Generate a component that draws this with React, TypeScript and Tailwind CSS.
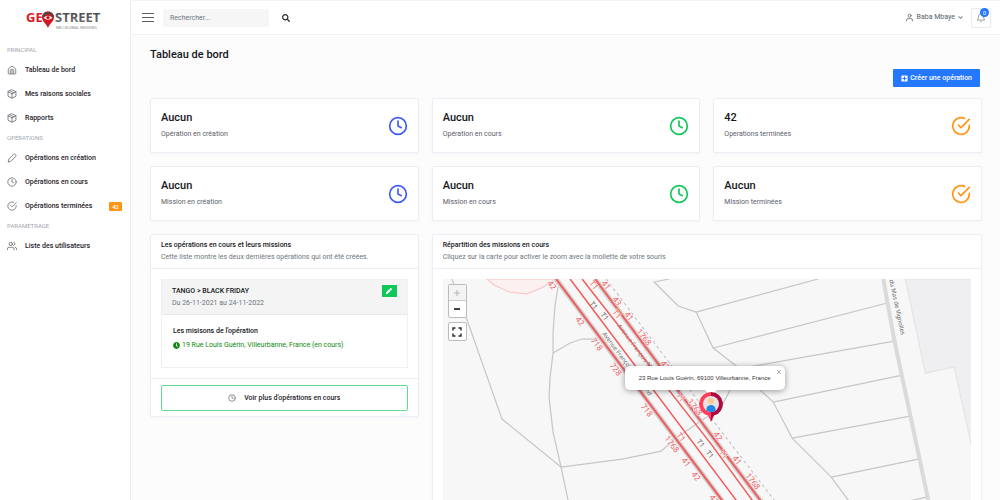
import type { ReactNode } from 'react'
import { FiBell, FiCheckCircle, FiClock, FiUser, FiUsers } from 'react-icons/fi'
import { FaChevronDown, FaClock, FaPen, FaPlusSquare, FaSearch } from 'react-icons/fa'

const HomeIcon = () => (
  <svg viewBox="0 0 24 24" className="size-[10px]" fill="none" stroke="currentColor" strokeWidth="1.8" strokeLinejoin="round">
    <path d="M3 9.500 12 2.500l9 7V20a1.500 1.500 0 0 1-1.500 1.500h-15A1.500 1.500 0 0 1 3 20z" />
    <path d="M8 21v-8a2 2 0 0 1 2-2h4a2 2 0 0 1 2 2v8M12 11v10" />
  </svg>
)

const BoxIcon = () => (
  <svg viewBox="0 0 24 24" className="size-[10px]" fill="none" stroke="currentColor" strokeWidth="1.8" strokeLinejoin="round" strokeLinecap="round">
    <path d="M12 2 21.500 6.500v11L12 22l-9.500-4.500v-11z" />
    <path d="M2.500 6.500 12 11.500l9.500-5M12 11.500V22M7 4.500l9.500 5" />
  </svg>
)

const PencilIcon = () => (
  <svg viewBox="0 0 24 24" className="size-[10px]" fill="none" stroke="currentColor" strokeWidth="1.8" strokeLinejoin="round" strokeLinecap="round">
    <path d="M3 21l1.500-6.500L16 3a2.500 2.500 0 0 1 3.500 0L21 4.500A2.500 2.500 0 0 1 21 8L9.500 19.500z" />
  </svg>
)

const menu: { label: string; items: { name: string; icon: ReactNode; badge?: string }[] }[] = [
  {
    label: 'PRINCIPAL',
    items: [
      { name: 'Tableau de bord', icon: <HomeIcon /> },
      { name: 'Mes raisons sociales', icon: <BoxIcon /> },
      { name: 'Rapports', icon: <BoxIcon /> },
    ],
  },
  {
    label: 'OPÉRATIONS',
    items: [
      { name: 'Opérations en création', icon: <PencilIcon /> },
      { name: 'Opérations en cours', icon: <FiClock size={10} strokeWidth={1.8} /> },
      { name: 'Opérations terminées', icon: <FiCheckCircle size={10} strokeWidth={1.8} />, badge: '42' },
    ],
  },
  {
    label: 'PARAMÉTRAGE',
    items: [{ name: 'Liste des utilisateurs', icon: <FiUsers size={10} strokeWidth={1.8} /> }],
  },
]

const stats = [
  { value: 'Aucun', label: 'Opération en création', icon: FiClock, color: 'text-[#3f5bfa]' },
  { value: 'Aucun', label: 'Opération en cours', icon: FiClock, color: 'text-[#10c759]' },
  { value: '42', label: 'Operations terminées', icon: FiCheckCircle, color: 'text-[#ff9512]' },
  { value: 'Aucun', label: 'Mission en création', icon: FiClock, color: 'text-[#3f5bfa]' },
  { value: 'Aucun', label: 'Mission en cours', icon: FiClock, color: 'text-[#10c759]' },
  { value: 'Aucun', label: 'Mission terminées', icon: FiCheckCircle, color: 'text-[#ff9512]' },
]

const parcels = [
  'M9 0 23 38 59 140 118 188 125 221 137 300',
  'M115 8 112 26 110 53V74L107 98 106 119 110 153 118 188',
  'M110 74 127 64 139 60H154',
  'M118 188 179 180 218 172 233 159 262 139 273 133 280 124 287 111',
  'M226 0 211 3 235 27 253 33 375 0',
  'M253 33 270 69 293 87 316 110 330 123 349 159 388 198 405 221 440 300',
  'M270 69 444 24',
  'M300 89 451 62',
  'M330 123 459 96',
  'M349 159 467 137',
  'M388 198 475 180',
  'M405 236 483 218',
]

const refs: [string, number, number][] = [
  ['42', 109, 6], ['42', 137, 42], ['718', 154, 65], ['728', 173, 90], ['718', 204, 131],
  ['1768', 229, 165], ['41', 243, 183], ['42', 253, 197], ['42', 271, 220],
  ['T1', 151, 6], ['41', 163, 6], ['43', 174, 22], ['T1', 174, 35], ['41', 186, 37],
  ['1768', 201, 58], ['42', 222, 86], ['T1', 238, 118], ['1768', 252, 128], ['T1', 238, 158],
  ['42', 275, 157], ['T1', 281, 175], ['41', 294, 181], ['1768', 310, 202],
]

const tramRefs: [string, number, number][] = [
  ['T1', 151, 26], ['T1', 162, 37], ['T1', 258, 164], ['T1', 267, 175],
]

function Logo() {
  return (
    <svg viewBox="0 0 78 22" className="h-[22px] w-[78px]" role="img" aria-label="Geostreet">
      <defs>
        <linearGradient id="geo" x1="0" y1="0" x2="0" y2="1">
          <stop offset="0" stopColor="#ee1c25" />
          <stop offset="1" stopColor="#c8141c" />
        </linearGradient>
        <linearGradient id="street" x1="0" y1="0" x2="0" y2="1">
          <stop offset="0" stopColor="#3c3c3e" />
          <stop offset="1" stopColor="#77787b" />
        </linearGradient>
      </defs>
      <g fontFamily="'Open Sans', sans-serif" fontWeight="700" fontSize="13">
        <text x="0" y="13" fill="url(#geo)">GE</text>
        <text x="29" y="13" fill="url(#street)">STREET</text>
      </g>
      <path d="M22 19C20.500 14.800 16 12.500 16 8.300a6 6 0 0 1 12 0c0 4.200-4.500 6.500-6 10.700z" fill="#d3161e" />
      <path d="M17 8.300a5.200 5.200 0 0 1 10.200 0" fill="none" stroke="#4a4a4c" strokeWidth="2" />
      <path d="M17.500 8.800q4.500-4 9 0-4.500 4-9 0z" fill="#fff" />
      <circle cx="22" cy="8.600" r="1.700" fill="#d3161e" />
      <text x="30" y="20" fontFamily="Roboto, sans-serif" fontSize="4" fill="#8b8b8e">NRJ GLOBAL REGIONS</text>
    </svg>
  )
}

function Sidebar() {
  return (
    <aside className="w-[131px] shrink-0 border-r border-[#ebedf7] bg-white">
      <div className="flex h-[42px] items-start justify-center pt-[9px]">
        <Logo />
      </div>
      <nav>
        {menu.map((group) => (
          <div key={group.label}>
            <h3 className="h-4 pl-[7px] text-[6px] leading-4 text-[#a3a6ad]">{group.label}</h3>
            {group.items.map((item) => (
              <a key={item.name} href="#" className="flex h-6 items-center pr-2 pl-[7px] text-[#5b6068]">
                <span className="flex w-[18px]">{item.icon}</span>
                <span className="text-[7px] font-medium whitespace-nowrap text-[#1f2328]">{item.name}</span>
                {item.badge && (
                  <span className="ml-auto rounded-[1px] bg-[#ff9512] px-[3px] text-[6px] leading-[9px] font-medium text-white">
                    {item.badge}
                  </span>
                )}
              </a>
            ))}
          </div>
        ))}
      </nav>
    </aside>
  )
}

function Topbar() {
  return (
    <header className="flex h-[35px] items-center border-y border-[#f2f3f5] bg-white pr-[9px] pl-[11px]">
      <button aria-label="Menu" className="flex w-3 flex-col gap-[3px]">
        <span className="h-px w-full bg-[#5b6068]" />
        <span className="h-px w-full bg-[#5b6068]" />
        <span className="h-px w-full bg-[#5b6068]" />
      </button>
      <input
        type="search"
        aria-label="Rechercher"
        placeholder="Rechercher..."
        className="ml-[9px] h-[18px] w-[106px] rounded-[2px] bg-[#f6f6f6] px-[7px] text-[7px] placeholder:text-[#6c757d]"
      />
      <button aria-label="Lancer la recherche" className="ml-[13px] text-[#2b2f33]">
        <FaSearch size={8} />
      </button>
      <button className="ml-auto flex items-center gap-[3px] text-[7px] text-[#5b6068]">
        <FiUser size={9} />
        Baba Mbaye
        <FaChevronDown size={5} />
      </button>
      <button aria-label="Notifications" className="relative ml-2 flex size-5 items-center justify-center rounded-[2px] border border-[#e9ebef] text-[#8a9099]">
        <FiBell size={10} />
        <span className="absolute -top-px right-px flex size-[9px] items-center justify-center rounded-full bg-[#2478ff] text-[6px] text-white">
          0
        </span>
      </button>
    </header>
  )
}

function MapPin() {
  return (
    <svg viewBox="0 0 26 32" className="absolute top-[112px] left-[255px] h-8 w-[26px]">
      <path d="M13 1a12 12 0 0 0-3 23.600L13 31z" fill="#ff3e5b" />
      <path d="M13 1a12 12 0 0 1 3 23.600L13 31z" fill="#ad0a42" />
      <circle cx="13" cy="13" r="8" fill="#e9e2e2" />
      <circle cx="13" cy="10" r="3" fill="#fdc98f" />
      <path d="M8.500 19.500v-1.500a4.500 4 0 0 1 9 0v1.500a8 8 0 0 1-9 0z" fill="#1e88e5" />
    </svg>
  )
}

function MissionMap() {
  return (
    <div className="relative h-[300px] overflow-hidden bg-[#f7f7f7]">
      <svg viewBox="0 0 528 300" preserveAspectRatio="xMinYMin slice" className="size-full" fontFamily="'Noto Sans', sans-serif">
        <path d="M462 0 482 94 511 88 529 171V0z" fill="#efeef1" stroke="#e2e1e4" />
        <path d="M44 0 51 6 66 13 84 15 98 9 109 3 112 0z" fill="#fdf0f0" stroke="#fbc4c4" />
        <g fill="none" stroke="#c6c6c6" strokeWidth="1.200">
          {parcels.map((d) => (
            <path key={d} d={d} />
          ))}
        </g>
        <path d="M440 0 451 61 485 221 500 300" fill="none" stroke="#dadada" strokeWidth="4" />
        <path d="M163 0 271 143 331 221 392 300" fill="none" stroke="#bdbdbd" strokeDasharray="3 3" />
        <g fill="none" stroke="#d2d2d2" strokeWidth="5">
          <path d="M113 0 278 220 338 300" />
          <path d="M152 0 268 156 317 221 377 300" />
        </g>
        <g fill="#666" fontSize="6">
          <text transform="translate(159 55) rotate(53)">Avenue François Mitterrand</text>
          <text transform="translate(174 47) rotate(53)">Avenue François Mitterrand</text>
          <text transform="translate(446 1) rotate(78)">du Mas de Vignolles</text>
        </g>
        <g fill="none" stroke="#f15b5b">
          <path d="M113 0 278 220 338 300" strokeWidth="2" />
          <path d="M127 0 293 221 352 300" strokeWidth="1.500" />
          <path d="M139 0 268 165 309 221 367 300" strokeWidth="1.500" />
          <path d="M152 0 268 156 317 221 377 300" strokeWidth="2" />
        </g>
        <g fontSize="8" textAnchor="middle">
          {refs.map(([text, x, y]) => (
            <text key={`${x}-${y}`} transform={`translate(${x} ${y}) rotate(53)`} y="3" fill="#f25f5f" stroke="#f7f7f7" strokeWidth="1" paintOrder="stroke">
              {text}
            </text>
          ))}
          {tramRefs.map(([text, x, y]) => (
            <text key={`${x}-${y}`} transform={`translate(${x} ${y}) rotate(53)`} y="3" fontSize="7" fill="#666">
              {text}
            </text>
          ))}
        </g>
      </svg>

      <div className="absolute top-[5px] left-[5px] flex flex-col gap-1">
        <div className="flex w-[19px] flex-col rounded-[2px] border border-[#bcbcbc] bg-white text-black">
          <button aria-label="Zoom avant" disabled className="flex h-4 items-center justify-center border-b border-[#ccc] bg-[#f4f4f4] text-[#b5b5b5]">
            <svg viewBox="0 0 8 8" className="size-2" stroke="currentColor"><path d="M1 4h6M4 1v6" /></svg>
          </button>
          <button aria-label="Zoom arrière" className="flex h-4 items-center justify-center">
            <svg viewBox="0 0 8 8" className="size-2" stroke="currentColor" strokeWidth="1.500"><path d="M1 4h6" /></svg>
          </button>
        </div>
        <button aria-label="Plein écran" className="flex size-[19px] items-center justify-center rounded-[2px] border border-[#bcbcbc] bg-white text-[#333]">
          <svg viewBox="0 0 10 10" className="size-[10px]" fill="none" stroke="currentColor" strokeWidth="1.500">
            <path d="M1 3.500V1h2.500M6.500 1H9v2.500M9 6.500V9H6.500M3.500 9H1V6.500" />
          </svg>
        </button>
      </div>

      <div className="absolute top-[87px] left-[182px] flex h-6 items-center rounded-[5px] bg-white px-[14px] font-['Liberation_Sans',sans-serif] text-[6px] whitespace-nowrap text-[#333] shadow-[0_1px_6px_rgba(0,0,0,0.4)]">
        23 Rue Louis Guérin, 69100 Villeurbanne, France
        <button aria-label="Fermer" className="absolute top-[3px] right-[3px] text-[#b0b0b0]">
          <svg viewBox="0 0 6 6" className="size-[6px]" stroke="currentColor"><path d="M1 1l4 4M5 1 1 5" /></svg>
        </button>
        <span className="absolute top-full left-1/2 border-x-[6px] border-t-[6px] border-x-transparent border-t-white" />
      </div>
      <MapPin />
    </div>
  )
}

const cardClass = 'rounded-[2px] border border-[#eceef6] bg-white shadow-[0_1px_3px_rgba(40,50,90,0.04)]'

function CardHeader({ title, text }: { title: string; text: string }) {
  return (
    <div className="border-b border-[#eceef6] px-[10px] pt-1 pb-[5px] leading-3">
      <h2 className="text-[7px] font-medium text-[#15181c]">{title}</h2>
      <p className="text-[7px] text-[#6c757d]">{text}</p>
    </div>
  )
}

export default function App() {
  return (
    <div className="flex h-screen overflow-hidden bg-[#fcfcfc] font-[Roboto,sans-serif]">
      <Sidebar />
      <div className="min-w-0 flex-1">
        <Topbar />
        <main className="pr-[18px] pl-[19px]">
          <h1 className="pt-3 text-[11px] leading-4 font-medium text-[#15181c]">Tableau de bord</h1>
          <div className="flex justify-end pt-[6px] pr-[2px] pb-[11px]">
            <button className="flex h-[18px] items-center gap-[2px] rounded-[1px] bg-[#2478ff] px-2 text-[7px] font-medium text-white">
              <FaPlusSquare size={7} />
              Créer une opération
            </button>
          </div>

          <div className="grid grid-cols-3 items-start gap-[13px]">
            {stats.map((stat) => (
              <section key={stat.label} className={`${cardClass} flex items-center justify-between px-[10px] py-[10px]`}>
                <div>
                  <p className="text-[11px] leading-[18px] font-medium text-[#15181c]">{stat.value}</p>
                  <p className="text-[7px] leading-[15px] text-[#5b6068]">{stat.label}</p>
                </div>
                <stat.icon size={20} strokeWidth={2} className={stat.color} />
              </section>
            ))}

            <section className={cardClass}>
              <CardHeader
                title="Les opérations en cours et leurs missions"
                text="Cette liste montre les deux dernières opérations qui ont été créées."
              />
              <div className="p-[10px]">
                <article className="border border-[#f0f1f3]">
                  <div className="flex items-start justify-between border-b border-[#e6e8ec] bg-[#f4f4f4] px-[10px] pt-[5px] pb-[5px] leading-3">
                    <div className="text-[7px]">
                      <h3 className="font-medium text-[#15181c]">TANGO &gt; BLACK FRIDAY</h3>
                      <p className="text-[#6c757d]">Du 26-11-2021 au 24-11-2022</p>
                    </div>
                    <button aria-label="Modifier" className="flex h-3 w-[15px] items-center justify-center bg-[#10c759] text-white">
                      <FaPen size={6} />
                    </button>
                  </div>
                  <div className="px-[11px] pt-[9px] pb-[15px] text-[7px] leading-[14px]">
                    <h4 className="font-medium text-[#15181c]">Les misisons de l'opération</h4>
                    <p className="flex items-center gap-[2px] text-[#0d8a0d]">
                      <FaClock size={7} />
                      19 Rue Louis Guérin, Villeurbanne, France (en cours)
                    </p>
                  </div>
                </article>
              </div>
              <div className="border-t border-[#eceef6] px-[10px] pt-[6px] pb-[5px]">
                <button className="flex h-[26px] w-full items-center justify-center gap-2 rounded-[2px] border border-[#5fdc91] text-[7px] font-medium text-[#1f2328]">
                  <FiClock size={8} className="text-[#5b6068]" />
                  Voir plus d'opérations en cours
                </button>
              </div>
            </section>

            <section className={`${cardClass} col-span-2`}>
              <CardHeader
                title="Répartition des missions en cours"
                text="Cliquez sur la carte pour activer le zoom avec la mollette de votre souris"
              />
              <div className="p-[10px]">
                <MissionMap />
              </div>
            </section>
          </div>
        </main>
      </div>
    </div>
  )
}
